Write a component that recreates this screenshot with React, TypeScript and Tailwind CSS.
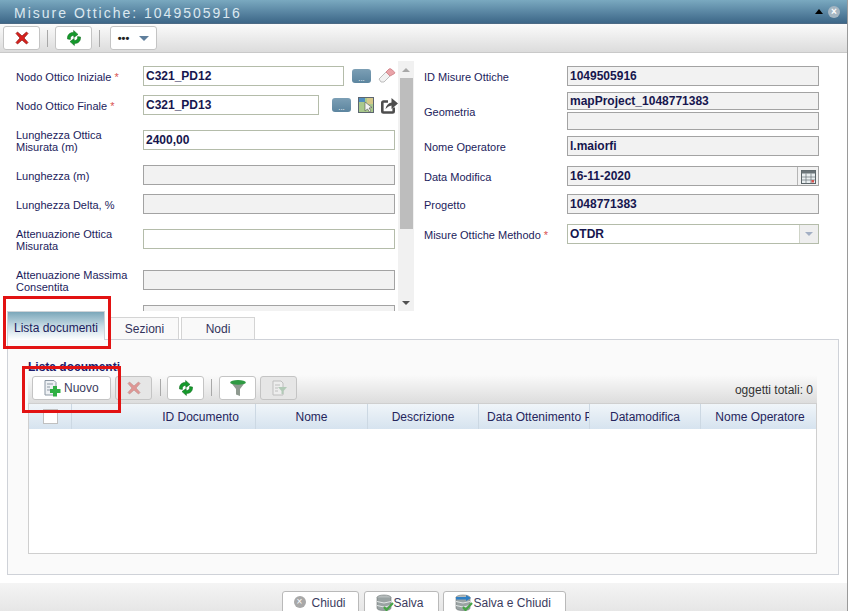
import type { ReactNode } from "react";

const font = "font-['Liberation_Sans',Arial,sans-serif]";

function RedX({ faded = false }: { faded?: boolean }) {
  return (
    <svg width="16" height="16" viewBox="0 0 16 16" className={faded ? "opacity-40" : ""}>
      <path d="M2 3.5 L3.5 2 L8 6 L12.5 2 L14 3.5 L10 8 L14 12.5 L12.5 14 L8 10 L3.5 14 L2 12.5 L6 8 Z" fill="#d9201c" stroke="#8c1512" strokeWidth="0.7" />
    </svg>
  );
}

function Refresh() {
  return (
    <svg width="18" height="18" viewBox="0 0 18 18">
      <path d="M2.5 10 C2 6 5 3.2 8.6 3.6 L8.6 1.5 L13 5.4 L8.8 8.6 L8.8 6.4 C6.6 6.2 5 7.8 5.4 10.4 Z" fill="#159a2c" stroke="#0b6318" strokeWidth="0.5" />
      <path d="M15.5 8 C16 12 13 14.8 9.4 14.4 L9.4 16.5 L5 12.6 L9.2 9.4 L9.2 11.6 C11.4 11.8 13 10.2 12.6 7.6 Z" fill="#159a2c" stroke="#0b6318" strokeWidth="0.5" />
    </svg>
  );
}

function Funnel() {
  return (
    <svg width="18" height="18" viewBox="0 0 18 18">
      <path d="M1.5 3 H16.5 L11 10 V17 L7 15.5 V10 Z" fill="#8f9a90" />
      <ellipse cx="9" cy="3.4" rx="7.8" ry="2.4" fill="#2f9a42" />
    </svg>
  );
}

function DocFilter() {
  return (
    <svg width="18" height="18" viewBox="0 0 18 18" className="opacity-50">
      <path d="M3 2 H11 L13 4 V16 H3 Z" fill="#f4f4f4" stroke="#9a9a9a" />
      <path d="M5 6 H10 M5 9 H8 M5 12 H8" stroke="#9a9a9a" />
      <path d="M8 8 H17 L13.5 12 V15 H11.5 V12 Z" fill="#7fb08a" />
    </svg>
  );
}

function DocPlus() {
  return (
    <svg width="19" height="18" viewBox="0 0 19 18">
      <path d="M2 1.5 H11 L13 3.5 V16 H2 Z" fill="#eef1f4" stroke="#8b97a3" />
      <path d="M4 5 H10 M4 8 H7 M4 11 H7" stroke="#8b97a3" />
      <path d="M10 7 H14 V10 H17.5 V14 H14 V17.5 H10 V14 H7 V10 H10 Z" fill="#30b044" />
    </svg>
  );
}

function Dots() {
  return (
    <span className="w-[19px] h-[14px] rounded-[3px] bg-gradient-to-b from-[#7c9fb5] to-[#5c859f] flex items-end justify-center text-[8px] leading-[9px] text-white">
      ...
    </span>
  );
}

function Eraser() {
  return (
    <svg width="18" height="16" viewBox="0 0 18 16">
      <path d="M1 11 L8 4 L12 8 L6 14 H3 Z" fill="#f2f2f2" stroke="#bdbdbd" />
      <path d="M8 4 L11 1 Q12 0.5 13 1 L16.5 4 Q17 5 16.5 5.5 L12 8 Z" fill="#e9a3a8" stroke="#d48a90" />
    </svg>
  );
}

function MapPick() {
  return (
    <svg width="16" height="16" viewBox="0 0 16 16">
      <rect x="0.5" y="0.5" width="15" height="15" fill="#a9c98c" stroke="#5c6670" />
      <path d="M1 5 H7 V1 H1 Z" fill="#4f8fc0" />
      <path d="M9 1 H15 V7 H9 Z" fill="#d6c98a" />
      <path d="M7 5 L7 14 L9.5 12 L11.5 15 L13 14 L11 11 L14 10.5 Z" fill="#f4f4f4" stroke="#555" strokeWidth="0.6" />
    </svg>
  );
}

function OpenLink() {
  return (
    <svg width="17" height="17" viewBox="0 0 17 17">
      <path d="M7 4.5 H2.5 Q1.3 4.5 1.3 5.7 V14.3 Q1.3 15.5 2.5 15.5 H11.5 Q12.7 15.5 12.7 14.3 V10.5" fill="none" stroke="#4d4d4d" strokeWidth="2.6" />
      <path d="M4.5 12 Q5.5 6.5 10.5 5.5 V1 L17 6.5 L10.5 12 V8.5 Q7.5 8.5 4.5 12 Z" fill="#4d4d4d" />
    </svg>
  );
}

function Calendar() {
  return (
    <svg width="15" height="15" viewBox="0 0 15 15">
      <rect x="0.5" y="1.5" width="14" height="13" fill="#e9eef0" stroke="#5a6468" />
      <rect x="0.5" y="1.5" width="14" height="3" fill="#6b7478" />
      <path d="M5 4.5 V14.5 M10 4.5 V14.5 M0.5 8 H14.5 M0.5 11 H14.5" stroke="#6b7478" strokeWidth="0.7" />
      <rect x="10.5" y="11" width="2.5" height="2.5" fill="#d9534f" />
    </svg>
  );
}

function Database({ arrow = false }: { arrow?: boolean }) {
  return (
    <svg width="18" height="18" viewBox="0 0 18 18" className="shrink-0">
      <ellipse cx="8" cy="3.5" rx="7" ry="2.5" fill="#b6bcbc" stroke="#6f7777" strokeWidth="0.6" />
      <path d="M1 3.5 V14 Q1 16.5 8 16.5 Q15 16.5 15 14 V3.5" fill="#9aa3a3" stroke="#6f7777" strokeWidth="0.6" />
      <path d="M1 7.5 Q8 10.5 15 7.5 M1 11.5 Q8 14.5 15 11.5" fill="none" stroke="#e4e8e8" />
      {arrow && <path d="M1 3 H11 V1 L16 4 L11 7 V5.5 H1 Z" fill="#2e7fc4" />}
      <path d="M8 13 L10.5 16 L17 9" fill="none" stroke="#46a546" strokeWidth="2.2" />
    </svg>
  );
}

function Row({ label, required, children, className = "", labelWidth = "w-[127px]" }: { label: ReactNode; required?: boolean; children: ReactNode; className?: string; labelWidth?: string }) {
  return (
    <div className={`flex items-center h-5 ${className}`}>
      <div className={`${labelWidth} shrink-0 pt-[2px] text-[11px] leading-[12px] text-[#1c1c5c]`}>
        {label}
        {required && <span className="text-[#d9534f]"> *</span>}
      </div>
      {children}
    </div>
  );
}

function Field({ value = "", disabled, className = "w-[252px]", h = "h-5" }: { value?: string; disabled?: boolean; className?: string; h?: string }) {
  return (
    <div
      className={`${className} ${h} border flex items-center pl-[2px] text-[12px] font-bold text-[#16164e] ${
        disabled ? "border-[#a3a3a3] bg-[#f2f2f2]" : "border-[#b4bcaa] bg-white"
      }`}
    >
      {value}
    </div>
  );
}

function ToolBtn({ children, className = "w-[37px]", faded }: { children: ReactNode; className?: string; faded?: boolean }) {
  return (
    <div
      className={`${className} h-[24px] shrink-0 rounded-[3px] border border-[#c4c4c4] flex items-center justify-center ${
        faded ? "bg-[#e6e6e6]" : "bg-white"
      }`}
    >
      {children}
    </div>
  );
}

function Sep({ className = "" }: { className?: string }) {
  return <div className={`w-px h-[17px] bg-[#a8a8a8] shrink-0 ${className}`} />;
}

function Tab({ label, className }: { label: string; className: string }) {
  return (
    <div className={`${className} h-[22px] mb-px border border-[#d4d4d4] border-b-0 flex items-center justify-center text-[12px] text-[#33335c] bg-[#f9f9f9]`}>
      {label}
    </div>
  );
}

function ColHead({ label, className }: { label: string; className: string }) {
  return (
    <div className={`${className} shrink-0 h-full border-r border-[#ccd8e3] flex items-center justify-center overflow-hidden whitespace-nowrap text-[12px] text-[#25255c]`}>
      {label}
    </div>
  );
}

function FootBtn({ children, className }: { children: ReactNode; className: string }) {
  return (
    <div className={`${className} h-[24px] shrink-0 rounded-t-[3px] border border-[#b9b9b9] bg-white flex items-start pl-[11px] pt-[2px] text-[12px] text-[#3b3b5e]`}>
      {children}
    </div>
  );
}

export default function App() {
  return (
    <div className={`relative w-[848px] h-[611px] overflow-hidden bg-white border-r border-[#9a9a9a] ${font}`}>
      {/* Title bar */}
      <div className="h-[24px] bg-gradient-to-b from-[#7aa9c0] to-[#3d6788] border-b border-[#4c6a85] flex items-center justify-between pl-[14px] pr-[7px]">
        <span className="pt-[3px] text-[14px] tracking-[2px] text-[#dbe8f0]">Misure Ottiche: 1049505916</span>
        <div className="flex items-center gap-[5px]">
          <span className="w-0 h-0 border-x-[4px] border-x-transparent border-b-[5px] border-b-black" />
          <span className="w-3 h-3 rounded-full bg-[#a5b6c2] flex items-center justify-center text-[10px] leading-none font-bold text-white">×</span>
        </div>
      </div>

      {/* Top toolbar */}
      <div className="h-[29px] bg-gradient-to-b from-[#fbfbfb] to-[#dcdcdc] border-b border-[#c9c9c9] flex items-center pl-[3px]">
        <ToolBtn><RedX /></ToolBtn>
        <Sep className="ml-[7px]" />
        <ToolBtn className="w-[37px] ml-[7px]"><Refresh /></ToolBtn>
        <Sep className="ml-[7px]" />
        <ToolBtn className="w-[47px] ml-[10px] gap-[10px]">
          <span className="text-[11px] leading-none font-bold text-[#222]">•••</span>
          <span className="w-0 h-0 border-x-[5px] border-x-transparent border-t-[5px] border-t-[#5f7f9c]" />
        </ToolBtn>
      </div>

      {/* Form */}
      <div className="h-[258px] flex overflow-hidden">
        <div className="w-[398px] shrink-0 pl-4 pt-[13px]">
          <Row label="Nodo Ottico Iniziale" required>
            <Field value="C321_PD12" className="w-[201px] shrink-0" />
            <div className="flex items-center ml-[8px] gap-[7px]">
              <Dots />
              <Eraser />
            </div>
          </Row>
          <Row label="Nodo Ottico Finale" required className="mt-[9px]">
            <Field value="C321_PD13" className="w-[176px] shrink-0" />
            <div className="flex items-center ml-[13px] gap-[7px]">
              <Dots />
              <MapPick />
              <OpenLink />
            </div>
          </Row>
          <Row label={<>Lunghezza Ottica<br />Misurata (m)</>} className="mt-[15px]">
            <Field value="2400,00" />
          </Row>
          <Row label="Lunghezza (m)" className="mt-[15px]">
            <Field disabled />
          </Row>
          <Row label="Lunghezza Delta, %" className="mt-[9px]">
            <Field disabled />
          </Row>
          <Row label={<>Attenuazione Ottica<br />Misurata</>} className="mt-[15px]">
            <Field />
          </Row>
          <Row label={<>Attenuazione Massima<br />Consentita</>} className="mt-[21px]">
            <Field disabled />
          </Row>
          <Row label="" className="mt-[15px]">
            <Field disabled />
          </Row>
        </div>

        {/* Scrollbar */}
        <div className="w-[16px] h-[250px] mt-[8px] shrink-0 bg-[#f1f1f1] flex flex-col items-center">
          <div className="h-[17px] flex items-center">
            <span className="w-0 h-0 border-x-[4px] border-x-transparent border-b-[4px] border-b-[#a8a8a8]" />
          </div>
          <div className="w-[13px] h-[151px] bg-[#bdbdbd]" />
          <div className="flex-1 flex items-end pb-[6px]">
            <span className="w-0 h-0 border-x-[4px] border-x-transparent border-t-[4px] border-t-[#505050]" />
          </div>
        </div>

        <div className="pl-[10px] pt-[13px]">
          <Row label="ID Misure Ottiche" labelWidth="w-[143px]">
            <Field value="1049505916" disabled />
          </Row>
          <div className="flex items-center mt-[6px]">
            <div className="w-[143px] shrink-0 pt-[2px] text-[11px] leading-[12px] text-[#1c1c5c]">Geometria</div>
            <div className="flex flex-col gap-[2px]">
              <Field value="mapProject_1048771383" disabled h="h-[18px]" />
              <Field disabled h="h-[18px]" />
            </div>
          </div>
          <Row label="Nome Operatore" labelWidth="w-[143px]" className="mt-[6px]">
            <Field value="l.maiorfi" disabled />
          </Row>
          <Row label="Data Modifica" labelWidth="w-[143px]" className="mt-[10px]">
            <div className="w-[252px] h-5 border border-[#a3a3a3] bg-[#f2f2f2] flex items-center text-[12px] font-bold text-[#16164e]">
              <span className="flex-1 pl-[2px]">16-11-2020</span>
              <span className="w-[21px] h-full border-l border-[#b5b5b5] flex items-center justify-center"><Calendar /></span>
            </div>
          </Row>
          <Row label="Progetto" labelWidth="w-[143px]" className="mt-[8px]">
            <Field value="1048771383" disabled />
          </Row>
          <Row label="Misure Ottiche Methodo" required labelWidth="w-[143px]" className="mt-[10px]">
            <div className="w-[252px] h-5 border border-[#b4bcaa] bg-white flex items-center text-[12px] font-bold text-[#16164e]">
              <span className="flex-1 pl-[2px]">OTDR</span>
              <span className="w-[19px] h-full border-l border-[#cfd4c8] bg-[#eeeeee] flex items-center justify-center">
                <span className="w-0 h-0 border-x-[4px] border-x-transparent border-t-[4px] border-t-[#a3afc4]" />
              </span>
            </div>
          </Row>
        </div>
      </div>

      {/* Tabs */}
      <div className="pl-[7px] pr-[8px]">
        <div className="relative z-10 h-[29px] flex items-end">
          <div className="w-[98px] h-[29px] border border-[#cfd4d8] border-b-0 bg-gradient-to-b from-[#7ba7ba] via-[#c6dbe4] to-white flex items-end justify-center pb-[3px] text-[12px] text-[#1c1c5c]">
            Lista documenti
          </div>
          <Tab label="Sezioni" className="w-[69px] ml-[5px]" />
          <Tab label="Nodi" className="w-[74px] ml-[2px]" />
        </div>

        {/* Tab panel */}
        <div className="-mt-px h-[236px] border border-[#cfd2d8] bg-[#fafafa] pl-[20px] pr-[21px] pt-[20px]">
          <div className="h-[15px] text-[12px] leading-[14px] font-bold text-[#1c1c6c]">Lista documenti</div>
          <div className="h-[28px] bg-gradient-to-b from-[#fafafa] to-[#dddddd] flex items-start pt-px pl-[4px] pr-[4px]">
            <ToolBtn className="w-[79px] !justify-start pl-[10px] gap-[2px] text-[12px] text-[#3b3b5e]">
              <DocPlus />
              Nuovo
            </ToolBtn>
            <ToolBtn className="w-[37px] ml-[4px]" faded><RedX faded /></ToolBtn>
            <Sep className="ml-[8px] mt-[3px]" />
            <ToolBtn className="w-[37px] ml-[6px]"><Refresh /></ToolBtn>
            <Sep className="ml-[7px] mt-[3px]" />
            <ToolBtn className="w-[37px] ml-[7px]"><Funnel /></ToolBtn>
            <ToolBtn className="w-[37px] ml-[4px]" faded><DocFilter /></ToolBtn>
            <span className="ml-auto self-center text-[12px] text-[#333]">oggetti totali: 0</span>
          </div>

          {/* Grid */}
          <div className="h-[151px] border border-[#cfcfcf] bg-white">
            <div className="h-[25px] flex items-center bg-gradient-to-b from-[#f0f5f9] to-[#d6e3ef]">
              <div className="w-[43px] shrink-0 h-full border-r border-[#ccd8e3] flex items-center justify-center">
                <span className="w-[15px] h-[15px] border border-[#c0c0c0] bg-white" />
              </div>
              <div className="w-[74px] shrink-0" />
              <ColHead label="ID Documento" className="w-[110px]" />
              <ColHead label="Nome" className="w-[112px]" />
              <ColHead label="Descrizione" className="w-[111px]" />
              <ColHead label="Data Ottenimento Pianificata" className="w-[111px] !justify-start pl-[8px]" />
              <ColHead label="Datamodifica" className="w-[111px]" />
              <ColHead label="Nome Operatore" className="w-[115px] !border-r-0 pl-[3px]" />
            </div>
          </div>
        </div>
      </div>

      {/* Footer */}
      <div className="mt-[8px] h-[28px] bg-gradient-to-b from-[#f4f4f4] to-[#e6e6e6] flex justify-center pt-[8px]">
        <FootBtn className="w-[77px]">
          <span className="mt-[2px] w-3 h-3 shrink-0 rounded-full bg-[#a8a8a8] flex items-center justify-center text-[10px] leading-none text-white">×</span>
          <span className="ml-[6px]">Chiudi</span>
        </FootBtn>
        <FootBtn className="w-[75px] ml-[5px]"><Database />Salva</FootBtn>
        <FootBtn className="w-[123px] ml-[4px] gap-px"><Database arrow />Salva e Chiudi</FootBtn>
      </div>

      {/* Red marks drawn over the screenshot */}
      <div className="absolute left-[3px] top-[296px] w-[108px] h-[53px] border-[3px] border-[#e21212] z-20" />
      <div className="absolute left-[22px] top-[366px] w-[99px] h-[47px] border-[3px] border-[#e21212] z-20" />
    </div>
  );
}
